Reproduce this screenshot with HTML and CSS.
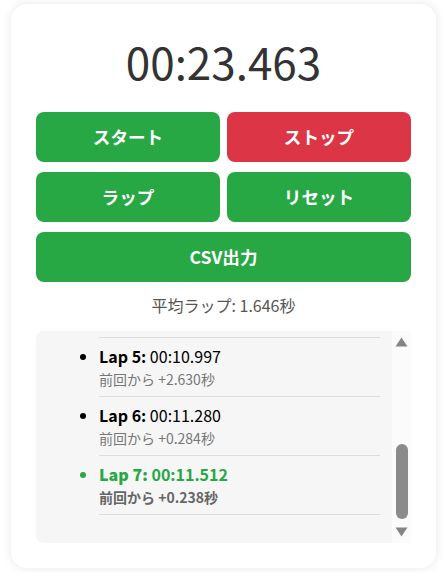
FILE: index.html
```html
<!DOCTYPE html>
<html lang="ja">
<head>
<meta charset="utf-8">
<title>ストップウォッチ</title>
<link rel="stylesheet" href="styles.css">
</head>
<body>
<div class="card">
  <div class="timer">00:23.463</div>
  <div class="buttons">
    <button class="btn green">スタート</button>
    <button class="btn red">ストップ</button>
    <button class="btn green">ラップ</button>
    <button class="btn green">リセット</button>
    <button class="btn green wide">CSV出力</button>
  </div>
  <div class="average">平均ラップ: 1.646秒</div>
  <div class="laps">
    <div class="laps-scroll">
      <div class="laps-inner">
        <ul class="lap-list">
          <li class="lap"><div class="lap-main"><b>Lap 1:</b> 00:02.104</div><div class="lap-diff">前回から +2.104秒</div></li>
          <li class="lap"><div class="lap-main"><b>Lap 2:</b> 00:04.518</div><div class="lap-diff">前回から +2.414秒</div></li>
          <li class="lap"><div class="lap-main"><b>Lap 3:</b> 00:06.322</div><div class="lap-diff">前回から +1.804秒</div></li>
          <li class="lap"><div class="lap-main"><b>Lap 4:</b> 00:08.367</div><div class="lap-diff">前回から +2.045秒</div></li>
          <li class="lap"><div class="lap-main"><b>Lap 5:</b> 00:10.997</div><div class="lap-diff">前回から +2.630秒</div></li>
          <li class="lap"><div class="lap-main"><b>Lap 6:</b> 00:11.280</div><div class="lap-diff">前回から +0.284秒</div></li>
          <li class="lap latest"><div class="lap-main"><b>Lap 7:</b> 00:11.512</div><div class="lap-diff">前回から +0.238秒</div></li>
        </ul>
      </div>
    </div>
    <div class="scrollbar">
      <svg class="arrow" width="13" height="10" viewBox="0 0 13 10"><path d="M6.5 0.5 L12.5 9.5 L0.5 9.5 Z" fill="#858585"/></svg>
      <div class="track">
        <div class="thumb"></div>
      </div>
      <svg class="arrow" width="13" height="10" viewBox="0 0 13 10"><path d="M0.5 0.5 L12.5 0.5 L6.5 9.5 Z" fill="#858585"/></svg>
    </div>
  </div>
</div>
</body>
</html>
```

FILE: styles.css
```css
html, body {
  margin: 0;
  background: #ffffff;
}
body {
  padding: 4px 11px;
  font-family: "Noto Sans CJK JP", "Noto Sans", sans-serif;
  color: #333;
}
.card {
  background: #fff;
  border-radius: 16px;
  box-shadow: 0 0 10px rgba(0, 0, 0, 0.1);
  padding: 25px;
}
.timer {
  font-size: 44px;
  line-height: 65px;
  text-align: center;
  color: #333;
  margin-bottom: 18px;
}
.buttons {
  display: grid;
  grid-template-columns: 1fr 1fr;
  gap: 10px 7px;
}
.btn {
  height: 50px;
  border: none;
  border-radius: 8px;
  color: #fff;
  font-family: "Noto Sans CJK JP", sans-serif;
  font-size: 17.6px;
  line-height: 24px;
  font-weight: bold;
  padding: 0;
}
.green { background: #28a745; }
.red { background: #dc3545; }
.wide { grid-column: 1 / 3; }
.average {
  text-align: center;
  font-size: 16px;
  color: #555;
  line-height: 23px;
  margin-top: 12px;
  margin-bottom: 14px;
}
.laps {
  height: 212px;
  display: flex;
}
.laps-scroll {
  flex: 1;
  background: #f6f6f6;
  border-radius: 8px 0 0 8px;
  overflow: hidden;
  display: flex;
  flex-direction: column-reverse;
}
.laps-inner {
  padding: 0 12px 28px 23px;
}
.lap-list {
  margin: 0;
  padding: 0 0 0 40px;
  list-style: disc;
}
.lap {
  border-bottom: 1px solid #ddd;
  padding: 6px 0 7px;
  color: #000;
}
.lap-main {
  font-size: 16px;
  line-height: 22px;
}
.lap-diff {
  font-size: 14px;
  line-height: 20px;
  margin-top: 2px;
  color: #777;
}
.latest {
  color: #28a745;
}
.latest .lap-main {
  font-weight: bold;
}
.latest .lap-diff {
  font-weight: bold;
  color: #666;
}
.scrollbar {
  width: 19px;
  background: #fbfbfb;
  display: flex;
  flex-direction: column;
  align-items: center;
  padding: 6px 0 6px;
  box-sizing: border-box;
}
.arrow {
  display: block;
  flex: none;
}
.track {
  flex: 1;
  width: 100%;
  display: flex;
  flex-direction: column;
  justify-content: flex-end;
  align-items: center;
  padding-bottom: 8px;
}
.thumb {
  width: 12px;
  height: 75px;
  border-radius: 6px;
  background: #8b8b8b;
}
```
